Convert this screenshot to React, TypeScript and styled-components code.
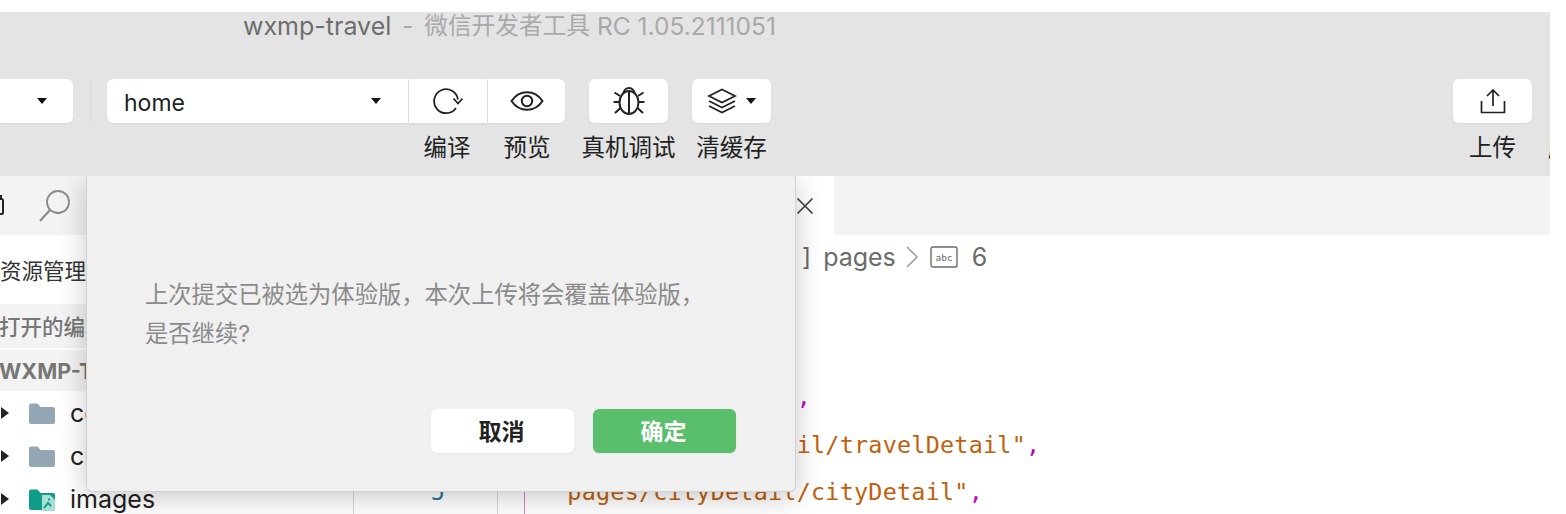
import React from 'react';
import styled, { createGlobalStyle } from 'styled-components';

const GlobalStyle = createGlobalStyle`
    html, body {
        margin: 0;
        padding: 0;
        height: 514px;
        overflow: hidden;
        background: #fff;
    }
    body {
        font-family: "Inter", "Liberation Sans", "Noto Sans CJK SC", sans-serif;
        color: #222;
    }
`;

const Page = styled.div`
    position: relative;
    width: 1550px;
    height: 514px;
    padding-top: 12px;
    box-sizing: border-box;
    overflow: hidden;
`;

const Header = styled.header`
    position: relative;
    z-index: 2;
    height: 164px;
    background: #e4e4e4;
    display: flex;
    flex-direction: column;
`;

const TitleBar = styled.div`
    height: 67px;
    padding: 0 0 0 243px;
    display: flex;
    align-items: flex-start;
    line-height: 28px;
    white-space: pre;
`;

const TitleName = styled.span`
    font-size: 25px;
    color: #6e6e6e;
`;

const TitleRest = styled.span<{ $size: number; $ml: number }>`
    margin-left: ${p => p.$ml}px;
    font-size: ${p => p.$size}px;
    color: #a9a9a9;
`;

const Toolbar = styled.div`
    display: flex;
    align-items: flex-start;
    position: relative;
`;

const ToolGroup = styled.div<{ $ml?: number; $w?: number }>`
    margin-left: ${p => p.$ml || 0}px;
    width: ${p => (p.$w ? `${p.$w}px` : 'auto')};
    display: flex;
    flex-direction: column;
    align-items: center;
    flex: none;
`;

const ToolRow = styled.div`
    display: flex;
    gap: 1px;
`;

const SelectBox = styled.div<{ $w: number; $round: string }>`
    width: ${p => p.$w}px;
    height: 44px;
    box-sizing: border-box;
    background: #fff;
    border-radius: ${p => p.$round};
    display: flex;
    align-items: center;
    justify-content: space-between;
    padding: 0 27px 0 17px;
    font-size: 23px;
    color: #222;
    box-shadow: 0 1px 2px rgba(0, 0, 0, 0.05);
`;

const SelectText = styled.span`
    padding-top: 3px;
`;

const Caret = styled.i`
    width: 0;
    height: 0;
    border-left: 5px solid transparent;
    border-right: 5px solid transparent;
    border-top: 6px solid #111;
    flex: none;
`;

const Divider = styled.div`
    width: 1px;
    height: 44px;
    margin-left: 17px;
    background: #d6d6d6;
    flex: none;
`;

const IconButton = styled.div<{ $w: number; $round?: string }>`
    width: ${p => p.$w}px;
    height: 44px;
    background: #fff;
    border-radius: ${p => p.$round || '6px'};
    display: flex;
    align-items: center;
    justify-content: center;
    gap: 9px;
    box-shadow: 0 1px 2px rgba(0, 0, 0, 0.05);
`;

const ToolLabel = styled.div`
    height: 28px;
    margin-top: 11px;
    font-size: 23.5px;
    line-height: 28px;
    color: #222;
    white-space: nowrap;
    text-align: center;
`;

const LabelPair = styled.div`
    display: flex;
    align-self: flex-start;
`;

const LabelCell = styled(ToolLabel)<{ $w: number }>`
    width: ${p => p.$w}px;
`;

const Spacer = styled.div`
    flex: 1;
`;

const ClippedLabel = styled(ToolLabel)`
    width: 2px;
    overflow: hidden;
    margin-top: 55px;
    margin-left: 16px;
`;

const Body = styled.div`
    height: 338px;
    display: flex;
`;

const Sidebar = styled.aside`
    width: 353px;
    flex: none;
    border-right: 1px solid #d8d8d8;
    overflow: hidden;
`;

const SideTabs = styled.div`
    height: 59px;
    background: #f3f3f3;
    display: flex;
    align-items: center;
    gap: 33px;
`;

const PaneTitle = styled.div`
    height: 69px;
    line-height: 72px;
    font-size: 21.5px;
    color: #333;
    white-space: nowrap;
`;

const SectionTitle = styled.div<{ $h: number; $bold?: boolean }>`
    height: ${p => p.$h}px;
    line-height: ${p => p.$h + 2}px;
    background: #f3f3f3;
    margin-bottom: 2px;
    font-size: 21.5px;
    font-weight: ${p => (p.$bold ? 700 : 500)};
    color: #777;
    white-space: nowrap;
    text-indent: -1px;
`;

const TreeList = styled.div`
    margin-top: -2px;
`;

const TreeRow = styled.div`
    height: 43px;
    display: flex;
    align-items: center;
    font-size: 25px;
    color: #222;
`;

const TreeArrow = styled.i`
    width: 0;
    height: 0;
    margin-left: 1px;
    border-top: 6px solid transparent;
    border-bottom: 6px solid transparent;
    border-left: 8px solid #222;
    flex: none;
`;

const TreeIcon = styled.svg`
    width: 27px;
    height: 24px;
    margin: 0 15px 0 19px;
    flex: none;
`;

const Main = styled.main`
    flex: 1;
    min-width: 0;
    overflow: hidden;
`;

const TabStrip = styled.div`
    height: 59px;
    display: flex;
    background: #f3f3f3;
`;

const ActiveTab = styled.div`
    width: 480px;
    background: #fff;
    display: flex;
    align-items: center;
    justify-content: flex-end;
    padding-right: 20px;
    box-sizing: border-box;
`;

const Breadcrumb = styled.div`
    height: 44px;
    display: flex;
    align-items: center;
    padding-left: 448px;
    font-size: 25px;
    color: #6b6b6b;
    white-space: nowrap;
`;

const CrumbText = styled.span<{ $ml: number }>`
    margin-left: ${p => p.$ml}px;
`;

const CrumbIcon = styled.span<{ $ml: number }>`
    display: flex;
    margin-left: ${p => p.$ml}px;
`;

const CodeRow = styled.div`
    height: 47.5px;
    display: flex;
    font-family: "DejaVu Sans Mono", "Liberation Mono", monospace;
    font-size: 23.4px;
    letter-spacing: 0.25px;
    line-height: 47.5px;
    white-space: pre;
`;

const LineNo = styled.div`
    width: 144px;
    box-sizing: border-box;
    border-right: 1px solid #d8d8d8;
    padding-right: 52px;
    text-align: right;
    color: #237893;
    flex: none;
`;

const CodeGap = styled.div`
    width: 26px;
    flex: none;
`;

const CodeText = styled.div`
    border-left: 1px solid #c98ac9;
    padding-left: 28px;
`;

const Str = styled.span`
    color: #c0610f;
`;

const Punct = styled.span`
    color: #c000c0;
`;

const Brace = styled(Punct)`
    padding-left: 29px;
`;

const Dialog = styled.div`
    position: absolute;
    left: 86px;
    top: 176px;
    width: 710px;
    height: 316px;
    box-sizing: border-box;
    padding: 99px 59px 0 58px;
    background: #f0f0f0;
    border: 1px solid #d2d2d2;
    border-top: none;
    border-radius: 0 0 6px 6px;
    box-shadow: 0 6px 28px rgba(0, 0, 0, 0.22);
    display: flex;
    flex-direction: column;
`;

const DialogText = styled.p`
    margin: 0;
    font-size: 23.3px;
    line-height: 39px;
    color: #8a8a8a;
    white-space: nowrap;
`;

const DialogActions = styled.div`
    margin-top: auto;
    margin-bottom: 38px;
    display: flex;
    justify-content: flex-end;
    gap: 19px;
`;

const DialogButton = styled.div<{ $primary?: boolean }>`
    width: 143px;
    height: 44px;
    box-sizing: border-box;
    padding: 0 2px 3px 0;
    border-radius: 6px;
    display: flex;
    align-items: center;
    justify-content: center;
    font-size: 23px;
    font-weight: 600;
    color: ${p => (p.$primary ? '#fff' : '#222')};
    background: ${p => (p.$primary ? '#5abf6c' : '#fff')};
    box-shadow: 0 1px 2px rgba(0, 0, 0, 0.05);
`;

const RefreshIcon = () => (
    <svg width="30" height="30" viewBox="0 0 30 30" fill="none" stroke="#222" strokeWidth="1.8">
        <path d="M23 22A12 12 0 1 1 25 13.500" />
        <path d="M20.500 12.500l4.500 5 4.500-5" />
    </svg>
);

const EyeIcon = () => (
    <svg width="34" height="22" viewBox="0 0 34 22" fill="none" stroke="#222" strokeWidth="2">
        <path d="M1.500 11C5.500 5 11 2.200 17 2.200S28.500 5 32.500 11C28.500 17 23 19.800 17 19.800S5.500 17 1.500 11Z" />
        <circle cx="17" cy="11" r="5.200" />
    </svg>
);

const BugIcon = () => (
    <svg width="34" height="32" viewBox="0 0 34 32" fill="none" stroke="#222" strokeWidth="2">
        <path d="M11.500 8.500a5.500 5.500 0 0 1 11 0" />
        <ellipse cx="17" cy="17.500" rx="9.500" ry="11.500" />
        <path d="M17 6v23" />
        <path d="M8 11L2.500 7.500M26 11l5.500-3.500M7.500 17H1.500M26.500 17h6M8.500 23l-5.500 5M25.500 23l5.500 5" />
    </svg>
);

const LayersIcon = () => (
    <svg width="30" height="26" viewBox="0 0 30 26" fill="none" stroke="#222" strokeWidth="1.800">
        <path d="M15 1.500l13 6.500-13 6.500L2 8z" />
        <path d="M2 13l13 6.500L28 13" />
        <path d="M2 18l13 6.500L28 18" />
    </svg>
);

const UploadIcon = () => (
    <svg width="28" height="28" viewBox="0 0 28 28" fill="none" stroke="#222" strokeWidth="1.700">
        <path d="M14 19V3M8 9l6-6 6 6" />
        <path d="M2.500 14v11.500h23V14" />
    </svg>
);

const SearchIcon = () => (
    <svg width="34" height="34" viewBox="0 0 34 34" fill="none" stroke="#8a8a8a" strokeWidth="1.800">
        <circle cx="20" cy="13" r="11" />
        <path d="M12 21L2 32" strokeWidth="2.200" />
    </svg>
);

// only the right edge of this icon shows, the window crops the rest
const ExplorerIcon = () => (
    <svg width="5" height="22" viewBox="0 0 5 22" fill="none" stroke="#222" strokeWidth="2">
        <rect x="-6" y="4" width="9" height="15" rx="1.500" />
        <path d="M-2 1h3v3" />
    </svg>
);

const CloseIcon = () => (
    <svg width="18" height="18" viewBox="0 0 18 18" fill="none" stroke="#444" strokeWidth="1.700">
        <path d="M1.500 1.500l15 15M16.500 1.500l-15 15" />
    </svg>
);

const AbcIcon = () => (
    <svg width="28" height="22" viewBox="0 0 28 22">
        <rect x="1" y="1" width="26" height="20" rx="2" fill="none" stroke="#6b6b6b" strokeWidth="1.400" />
        <text x="14" y="14.500" textAnchor="middle" fontSize="9.500" fontFamily="DejaVu Sans Mono" fill="#6b6b6b">abc</text>
    </svg>
);

const ChevronIcon = () => (
    <svg width="14" height="24" viewBox="0 0 14 24" fill="none" stroke="#9a9a9a" strokeWidth="1.500">
        <path d="M2 2l10 10L2 22" />
    </svg>
);

const FolderIcon = ({ image }: { image?: boolean }) => (
    <TreeIcon viewBox="0 0 27 24">
        <path
            d="M1 4.500a2 2 0 0 1 2-2h6.500l3 3.500H25a2 2 0 0 1 2 2V21a2 2 0 0 1-2 2H3a2 2 0 0 1-2-2z"
            fill={image ? '#0f9d8a' : '#93a6b4'}
        />
        {image && <path d="M14 8h8l5 5v11H14z" fill="#a9e0d6" />}
        {image && <path d="M16 21l4-5 3 3M21 11.500v2" stroke="#0f9d8a" strokeWidth="2" fill="none" />}
    </TreeIcon>
);

const App = () => {
    return (
        <Page>
            <GlobalStyle />
            <Header>
                <TitleBar>
                    <TitleName>wxmp-travel</TitleName>
                    <TitleRest $size={23.7} $ml={11}>-</TitleRest>
                    <TitleRest $size={23.7} $ml={11}>微信开发者工具</TitleRest>
                    <TitleRest $size={24.5} $ml={7}>RC 1.05.2111051</TitleRest>
                </TitleBar>
                <Toolbar>
                    <ToolGroup>
                        <SelectBox $w={73} $round="0 6px 6px 0">
                            <span />
                            <Caret style={{ marginRight: -1 }} />
                        </SelectBox>
                    </ToolGroup>
                    <Divider />
                    <ToolGroup $ml={16} $w={458}>
                        <ToolRow>
                            <SelectBox $w={301} $round="6px 0 0 6px">
                                <SelectText>home</SelectText>
                                <Caret />
                            </SelectBox>
                            <IconButton $w={78} $round="0">
                                <RefreshIcon />
                            </IconButton>
                            <IconButton $w={77} $round="0 6px 6px 0">
                                <EyeIcon />
                            </IconButton>
                        </ToolRow>
                        <LabelPair>
                            <LabelCell $w={301} />
                            <LabelCell $w={78}>编译</LabelCell>
                            <LabelCell $w={82}>预览</LabelCell>
                        </LabelPair>
                    </ToolGroup>
                    <ToolGroup $ml={24} $w={79}>
                        <IconButton $w={79}>
                            <BugIcon />
                        </IconButton>
                        <ToolLabel>真机调试</ToolLabel>
                    </ToolGroup>
                    <ToolGroup $ml={24} $w={79}>
                        <IconButton $w={79}>
                            <LayersIcon />
                            <Caret />
                        </IconButton>
                        <ToolLabel>清缓存</ToolLabel>
                    </ToolGroup>
                    <Spacer />
                    <ToolGroup>
                        <IconButton $w={79}>
                            <UploadIcon />
                        </IconButton>
                        <ToolLabel>上传</ToolLabel>
                    </ToolGroup>
                    <ClippedLabel>版</ClippedLabel>
                </Toolbar>
            </Header>
            <Body>
                <Sidebar>
                    <SideTabs>
                        <ExplorerIcon />
                        <SearchIcon />
                    </SideTabs>
                    <PaneTitle>资源管理器</PaneTitle>
                    <SectionTitle $h={44}>打开的编辑器</SectionTitle>
                    <SectionTitle $h={41} $bold>WXMP-TRAVEL</SectionTitle>
                    <TreeList>
                        <TreeRow>
                            <TreeArrow />
                            <FolderIcon />
                            components
                        </TreeRow>
                        <TreeRow>
                            <TreeArrow />
                            <FolderIcon />
                            cloud
                        </TreeRow>
                        <TreeRow>
                            <TreeArrow />
                            <FolderIcon image />
                            images
                        </TreeRow>
                    </TreeList>
                </Sidebar>
                <Main>
                    <TabStrip>
                        <ActiveTab>
                            <CloseIcon />
                        </ActiveTab>
                    </TabStrip>
                    <Breadcrumb>
                        ]
                        <CrumbText $ml={12}>pages</CrumbText>
                        <CrumbIcon $ml={9}><ChevronIcon /></CrumbIcon>
                        <CrumbIcon $ml={11}><AbcIcon /></CrumbIcon>
                        <CrumbText $ml={14}>6</CrumbText>
                    </Breadcrumb>
                    <CodeRow>
                        <LineNo>1</LineNo>
                        <CodeGap />
                        <Brace>{'{'}</Brace>
                    </CodeRow>
                    <CodeRow>
                        <LineNo>2</LineNo>
                    </CodeRow>
                    <CodeRow>
                        <LineNo>3</LineNo>
                        <CodeGap />
                        <CodeText><Str>"pages/home/home"</Str><Punct>,</Punct></CodeText>
                    </CodeRow>
                    <CodeRow>
                        <LineNo>4</LineNo>
                        <CodeGap />
                        <CodeText><Str>"pages/travelDetail/travelDetail"</Str><Punct>,</Punct></CodeText>
                    </CodeRow>
                    <CodeRow>
                        <LineNo>5</LineNo>
                        <CodeGap />
                        <CodeText><Str>"pages/cityDetail/cityDetail"</Str><Punct>,</Punct></CodeText>
                    </CodeRow>
                </Main>
            </Body>
            <Dialog>
                <DialogText>
                    上次提交已被选为体验版，本次上传将会覆盖体验版，
                    <br />
                    是否继续?
                </DialogText>
                <DialogActions>
                    <DialogButton>取消</DialogButton>
                    <DialogButton $primary>确定</DialogButton>
                </DialogActions>
            </Dialog>
        </Page>
    );
};

export default App;
